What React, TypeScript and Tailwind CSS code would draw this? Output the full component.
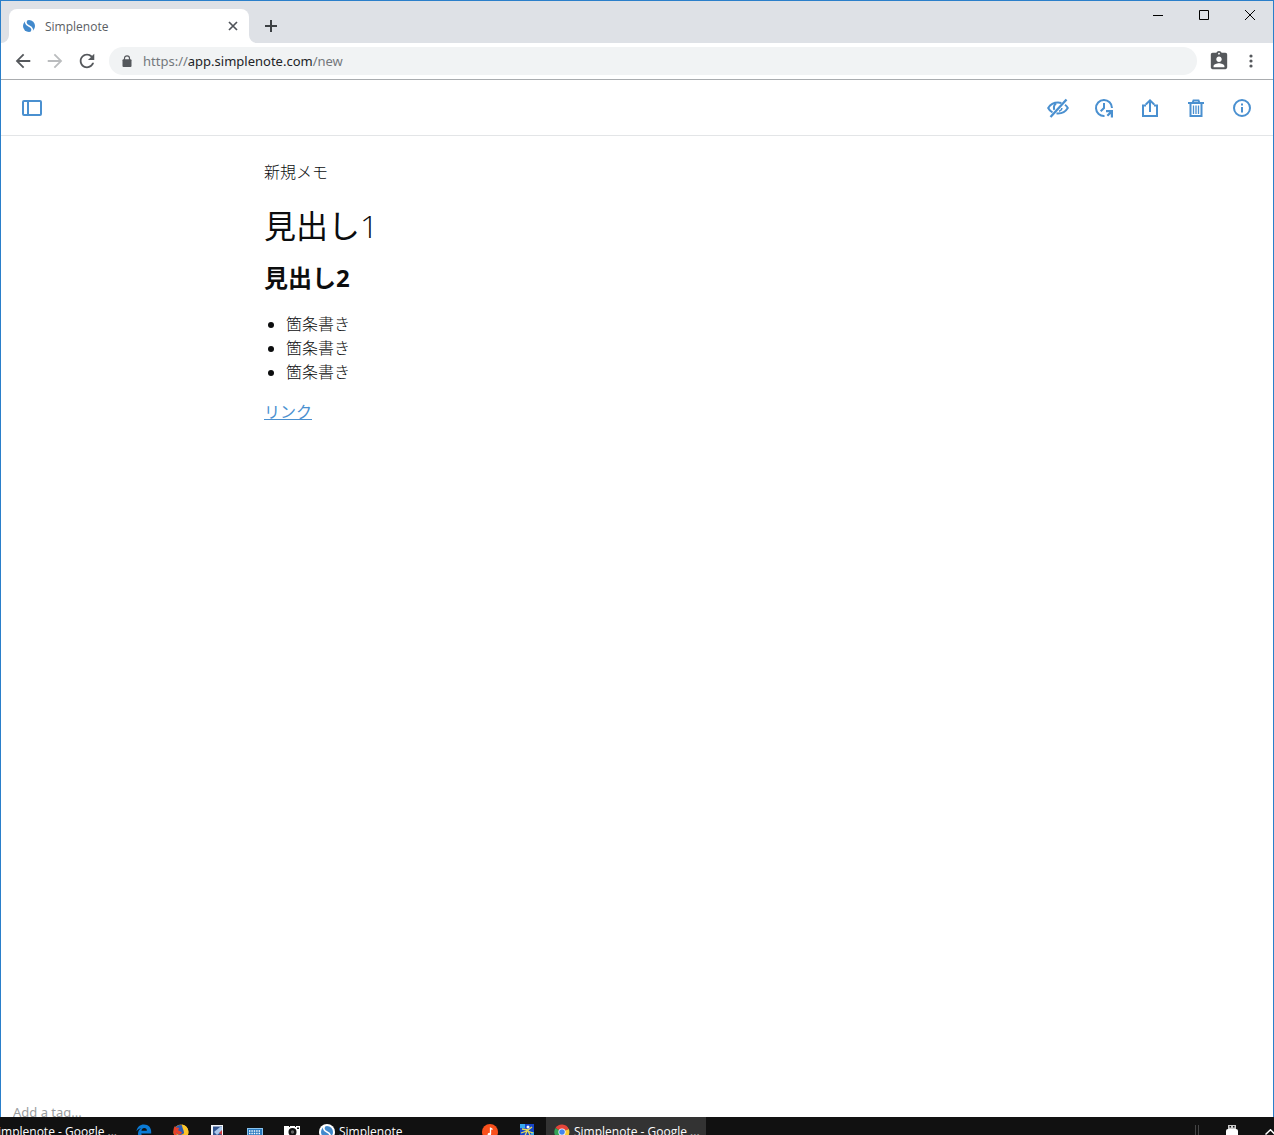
import type { ReactNode } from 'react'

const UI_FONT = 'font-["Open_Sans","Noto_Sans_CJK_JP",sans-serif]'

function SimplenoteLogo ({ className }: Readonly<{ className: string }>) {
  return (
    <svg viewBox="0 0 24 24" className={className} aria-hidden="true">
      <circle cx="12" cy="12" r="12" fill="#4289cc" />
      <path d="M8-2C4 4 5 9.500 12 12s8 8 4 14" fill="none" stroke="#fff" strokeWidth="3.500" />
    </svg>
  )
}

function TitleBar () {
  return (
    <header className="flex h-[42px] items-start justify-between bg-[#dee1e6] pl-2">
      <div className="flex items-center pt-2">
        <div className="relative flex h-[34px] w-60 items-center rounded-t-lg bg-white pr-2 pl-[14px]">
          <svg viewBox="0 0 8 8" className="absolute bottom-0 -left-2 size-2" fill="#fff" aria-hidden="true">
            <path d="M8 0v8H0a8 8 0 0 0 8-8z" />
          </svg>
          <SimplenoteLogo className="size-3" />
          <span className="ml-[10px] flex-1 pt-[2px] text-xs text-[#5a5e63]">Simplenote</span>
          <button type="button" aria-label="Close tab" className="p-[3px]">
            <svg viewBox="0 0 10 10" className="size-[10px]" stroke="#50545a" strokeWidth="1.700" aria-hidden="true">
              <path d="M1 1l8 8M9 1L1 9" />
            </svg>
          </button>
          <svg viewBox="0 0 8 8" className="absolute -right-2 bottom-0 size-2" fill="#fff" aria-hidden="true">
            <path d="M0 0v8h8a8 8 0 0 1-8-8z" />
          </svg>
        </div>
        <button type="button" aria-label="New tab" className="ml-4">
          <svg viewBox="0 0 12 12" className="size-3" stroke="#3c4043" strokeWidth="2" aria-hidden="true">
            <path d="M6 0v12M0 6h12" />
          </svg>
        </button>
      </div>
      <div className="flex">
        <button type="button" aria-label="Minimize" className="flex h-7 w-[46px] items-center justify-center">
          <svg viewBox="0 0 10 10" className="size-[10px]" stroke="#000" aria-hidden="true">
            <path d="M0 5.500h10" />
          </svg>
        </button>
        <button type="button" aria-label="Maximize" className="flex h-7 w-[46px] items-center justify-center">
          <svg viewBox="0 0 10 10" className="size-[10px]" fill="none" stroke="#000" aria-hidden="true">
            <path d="M.5.5h9v9h-9z" />
          </svg>
        </button>
        <button type="button" aria-label="Close" className="flex h-7 w-[46px] items-center justify-center">
          <svg viewBox="0 0 10 10" className="size-[10px]" stroke="#000" aria-hidden="true">
            <path d="M0 0l10 10M10 0L0 10" />
          </svg>
        </button>
      </div>
    </header>
  )
}

function AddressBar () {
  return (
    <nav className="flex h-[37px] items-center border-b border-[#a9acaf] bg-white px-3">
      <div className="flex gap-3">
        <button type="button" aria-label="Back">
          <svg viewBox="1 1 22 22" className="size-5" fill="#55585c" aria-hidden="true">
            <path d="M20 11H7.830l5.590-5.590L12 4l-8 8 8 8 1.410-1.410L7.830 13H20v-2z" />
          </svg>
        </button>
        <button type="button" aria-label="Forward">
          <svg viewBox="1 1 22 22" className="size-5" fill="#babcbe" aria-hidden="true">
            <path d="M12 4l-1.410 1.410L16.170 11H4v2h12.170l-5.580 5.590L12 20l8-8z" />
          </svg>
        </button>
        <button type="button" aria-label="Reload">
          <svg viewBox="1 1 22 22" className="size-5" fill="#55585c" aria-hidden="true">
            <path d="M17.650 6.350C16.200 4.900 14.210 4 12 4c-4.420 0-7.990 3.580-7.990 8s3.570 8 7.990 8c3.730 0 6.840-2.550 7.730-6h-2.080c-.82 2.330-3.040 4-5.650 4-3.310 0-6-2.690-6-6s2.690-6 6-6c1.660 0 3.140.69 4.220 1.780L13 11h7V4l-2.350 2.350z" />
          </svg>
        </button>
      </div>
      <div className="ml-3 flex h-7 flex-1 items-center rounded-full bg-[#f1f3f4] pl-3">
        <svg viewBox="0 0 10 12" className="size-3" aria-hidden="true">
          <path d="M2.500 5V3.300a2.500 2.500 0 0 1 5 0V5" fill="none" stroke="#55585c" strokeWidth="1.200" />
          <rect x="0.500" y="4.300" width="9" height="7.700" rx="1" fill="#55585c" />
        </svg>
        <p className="ml-[10px] pt-[2px] font-['Noto_Sans',sans-serif] text-[13px] text-[#74787c]">
          https://<span className="text-[#222428]">app.simplenote.com</span>/new
        </p>
      </div>
      <button type="button" aria-label="Profile" className="ml-3">
        <svg viewBox="1 0 22 24" className="h-[22px] w-5" fill="#55585c" aria-hidden="true">
          <path d="M19 3h-4.180C14.400 1.840 13.300 1 12 1c-1.300 0-2.400.84-2.820 2H5c-1.100 0-2 .9-2 2v14c0 1.100.9 2 2 2h14c1.100 0 2-.9 2-2V5c0-1.100-.9-2-2-2zm-7 0c.55 0 1 .45 1 1s-.45 1-1 1-1-.45-1-1 .45-1 1-1zm0 4c1.660 0 3 1.340 3 3s-1.340 3-3 3-3-1.340-3-3 1.340-3 3-3zm6 12H6v-1.400c0-2 4-3.100 6-3.100s6 1.100 6 3.100V19z" />
        </svg>
      </button>
      <button type="button" aria-label="Menu" className="ml-3 flex w-5 justify-center">
        <svg viewBox="0 0 4 14" className="h-[14px] w-1" fill="#55585c" aria-hidden="true">
          <circle cx="2" cy="2" r="1.600" />
          <circle cx="2" cy="7" r="1.600" />
          <circle cx="2" cy="12" r="1.600" />
        </svg>
      </button>
    </nav>
  )
}

function ToolbarButton ({ label, children }: Readonly<{ label: string, children: ReactNode }>) {
  return (
    <button type="button" aria-label={label}>
      <svg viewBox="0 0 24 24" className="size-6" fill="none" stroke="#4a90d0" strokeWidth="2" aria-hidden="true">
        {children}
      </svg>
    </button>
  )
}

function NoteToolbar () {
  return (
    <div className="flex h-14 items-center justify-between border-b border-[#e3e5e7] px-[19px]">
      <ToolbarButton label="Toggle sidebar">
        <rect x="3" y="5" width="18" height="14" rx="1" />
        <path d="M8 5v14" />
      </ToolbarButton>
      <div className="flex gap-[22px]">
        <ToolbarButton label="Edit">
          <path d="M6.500 16.300C4.300 15.200 2.900 13.500 2.200 12 4.200 8.700 7.900 6.500 12 6.500c1.200 0 2.300.2 3.400.5M19 8.800c1.200.9 2.200 2 2.800 3.200-2 3.300-5.700 5.500-9.800 5.500-.5 0-1-.1-1.500-.2" />
          <path d="M8.300 13.800C7.500 11.500 8.200 9 10 7.500" />
          <path d="M4.500 21L20.500 3.500" strokeWidth="2.300" />
          <path d="M13 15.300c1.700-.5 2.700-1.600 2.900-3.300" strokeWidth="1.500" />
        </ToolbarButton>
        <ToolbarButton label="History">
          <path d="M12.500 20A8 8 0 1 1 20 12" />
          <path d="M12 7v5l-3.300 3.300" />
          <path d="M14 14h7v7.500h-2.200v-3.600l-2.700 2.700-1.500-1.500 2.700-2.900H14z" fill="#4a90d0" stroke="none" />
        </ToolbarButton>
        <ToolbarButton label="Share">
          <path d="M8 9.500H5V20h14V9.500h-3M12 16V4.800M7.800 8.500L12 4.300l4.200 4.200" />
        </ToolbarButton>
        <ToolbarButton label="Trash">
          <path d="M4 7h16M8.500 7l1-2.500h5l1 2.500M6.500 7v13h11V7" />
          <path d="M9.500 9.500V18M12 9.500V18M14.500 9.500V18" strokeWidth="1.300" />
        </ToolbarButton>
        <ToolbarButton label="Info">
          <circle cx="12" cy="12" r="8" />
          <path d="M12 11v5.500M12 7.500v2" />
        </ToolbarButton>
      </div>
    </div>
  )
}

function Note () {
  return (
    <article className="mx-auto w-full max-w-[746px] flex-1 pt-6 text-base leading-6 font-light text-[#0c0d0e]">
      <p>新規メモ</p>
      <h1 className="mt-4 text-[32px] leading-[52px] font-normal">見出し<span className="font-light">1</span></h1>
      <h2 className="mt-2 text-2xl leading-9 font-bold">見出し2</h2>
      <ul className="mt-4 list-disc pl-[22px]">
        <li>箇条書き</li>
        <li>箇条書き</li>
        <li>箇条書き</li>
      </ul>
      <p className="mt-4">
        <a href="#link" className="font-normal text-[#4a90d0] underline">リンク</a>
      </p>
    </article>
  )
}

function Taskbar () {
  return (
    <footer className="h-[18px] overflow-hidden bg-[#111]">
      <div className="flex h-[30px] items-center text-xs text-white">
        <button type="button" className="flex h-full w-[125px] items-center justify-end overflow-hidden pr-2">
          <span className="whitespace-nowrap">Simplenote - Google ...</span>
        </button>
        <button type="button" aria-label="Edge" className="flex w-[37px] justify-center">
          <svg viewBox="0 0 16 16" className="size-4" fill="#0b7bd6" aria-hidden="true">
            <path d="M.5 7.200C1 3 4 .5 8 .5c4.500 0 7.200 3.200 7.200 7.300v1.700H5.300c.1 2.200 2 3.300 4.500 3.300 1.700 0 3.300-.5 4.500-1.200v3c-1.300.8-3 1.200-5 1.200-4.300 0-7.300-2.400-7.300-6.200 0-2.400 1.400-4.400 3.500-5.500C3.600 4.600 1.800 5.300.5 7.200zM5.400 6.800h5.500C10.900 5 9.900 4 8.300 4 6.700 4 5.600 5.100 5.400 6.800z" />
          </svg>
        </button>
        <button type="button" aria-label="Firefox" className="flex w-[37px] justify-center">
          <svg viewBox="0 0 16 16" className="size-4" aria-hidden="true">
            <circle cx="8" cy="8" r="7.500" fill="#f9b51c" />
            <circle cx="7" cy="6" r="5" fill="#2b5bb3" />
            <path d="M.5 8C.3 5 1 3 2.200 1.800c0 1 .4 1.500 1 2 1.500-.6 2.300-.3 3 .4L5 6.300c1.300.8 3 1 4 2.200C7 12 4 10 3.500 8 3 11 5 14 9 15.400 4 16 .8 12.500.5 8z" fill="#e8402a" />
            <path d="M9 .6c5 1 7 5 6.300 8.700C14.500 13 12 15 9 15.400c2-2 2.400-4.400 2-7C10.500 5 9 4 9 .6z" fill="#fdc62b" />
          </svg>
        </button>
        <button type="button" aria-label="Notepad" className="flex w-[37px] justify-center">
          <svg viewBox="0 0 16 16" className="size-4" aria-hidden="true">
            <path d="M1 1h12v15H1z" fill="#f4f6fa" />
            <path d="M3 2.500h9V12H3z" fill="#33558f" />
            <path d="M4 8l6-5h2v4l-5 4z" fill="#a9c6ea" />
            <path d="M9 9l3-3v5z" fill="#d64043" />
          </svg>
        </button>
        <button type="button" aria-label="Keyboard" className="flex w-[37px] justify-center">
          <svg viewBox="0 0 16 16" className="size-4" aria-hidden="true">
            <rect y="4" width="16" height="10" fill="#8ac4ef" />
            <rect x="1" y="5" width="14" height="8" fill="#287ac0" />
            <path d="M2 7h12M2 9.500h12" stroke="#fff" strokeWidth="1.400" strokeDasharray="1.400 1" />
          </svg>
        </button>
        <button type="button" aria-label="Camera" className="flex w-[37px] justify-center">
          <svg viewBox="0 0 16 16" className="size-4" aria-hidden="true">
            <path d="M0 2h16v14H0z" fill="#fff" />
            <circle cx="8.500" cy="8" r="4" fill="#111" />
            <circle cx="8.500" cy="8" r="1.700" fill="#666" />
            <path d="M13 3.500h2v1.500h-2zM5 2h1v1H5zM11 2h1v1h-1z" fill="#111" />
          </svg>
        </button>
        <button type="button" className="flex w-40 items-center pl-[9px]">
          <span className="flex size-4 items-center justify-center rounded-full bg-white">
            <SimplenoteLogo className="size-3" />
          </span>
          <span className="ml-1">Simplenote</span>
        </button>
        <button type="button" aria-label="Music" className="flex w-[39px] justify-center">
          <svg viewBox="0 0 16 16" className="size-4" aria-hidden="true">
            <circle cx="8" cy="8" r="8" fill="#f9501c" />
            <path d="M8.500 3.500v6.500M8.500 4l2 1.500" stroke="#fff" strokeWidth="1.300" />
            <circle cx="7.300" cy="10.500" r="1.700" fill="#fff" />
          </svg>
        </button>
        <button type="button" aria-label="Launcher" className="flex w-[37px] justify-center">
          <svg viewBox="0 0 16 16" className="size-4" aria-hidden="true">
            <path d="M0 0h14v16H0z" fill="#1746c8" />
            <path d="M0 0h5v4H0zM11 8h3v4h-3z" fill="#36a8ef" />
            <path d="M2 5l6 1 4-3M1 9l6-2 6 2M7 7l-3 7M8 7l3 6" fill="none" stroke="#e6dc5a" strokeWidth="1.300" />
            <circle cx="8" cy="3" r="1.500" fill="#fff" />
          </svg>
        </button>
        <button type="button" className="flex h-full w-40 items-center bg-[#333] pl-2">
          <svg viewBox="0 0 16 16" className="size-4" aria-hidden="true">
            <path d="M8 8L1.500 4A7.500 7.500 0 0 1 14.800 5z" fill="#e5453a" />
            <path d="M8 8l6.800-3A7.500 7.500 0 0 1 8 15.500z" fill="#fbcb34" />
            <path d="M8 8v7.500A7.500 7.500 0 0 1 1.500 4z" fill="#33a457" />
            <circle cx="8" cy="8" r="3.600" fill="#fff" />
            <circle cx="8" cy="8" r="2.800" fill="#4485ee" />
          </svg>
          <span className="ml-1 whitespace-nowrap">Simplenote - Google ...</span>
        </button>
        <div className="ml-auto flex h-full items-center">
          <span className="mt-4 h-full w-1 border-x border-[#444]" />
          <svg viewBox="0 0 12 16" className="ml-[27px] h-4 w-3" aria-hidden="true">
            <path d="M2 1h8v4H2z" fill="#ccc" />
            <path d="M3.500 2h1.500v1.500H3.500zM7 2h1.500v1.500H7z" fill="#111" />
            <path d="M2 5h8a2 2 0 0 1 2 2v9H0V7a2 2 0 0 1 2-2z" fill="#fff" />
          </svg>
          <svg viewBox="0 0 9 6" className="ml-[27px] h-[6px] w-[9px]" fill="none" stroke="#fff" strokeWidth="1.500" aria-hidden="true">
            <path d="M.5 5.500L5.500.8l4.500 4.700" />
          </svg>
        </div>
      </div>
    </footer>
  )
}

export default function App () {
  return (
    <div className={`flex h-screen flex-col overflow-hidden bg-white ${UI_FONT}`}>
      <div className="flex min-h-0 flex-1 flex-col overflow-hidden border-x border-t border-[#2a7fca]">
        <TitleBar />
        <AddressBar />
        <main className="flex min-h-0 flex-1 flex-col">
          <NoteToolbar />
          <Note />
          <div className="h-4 overflow-hidden px-3">
            <input
              type="text"
              aria-label="Add a tag"
              placeholder="Add a tag..."
              className="block h-[22px] w-full font-['Noto_Sans',sans-serif] text-[13px] placeholder:text-[#9a9da0] focus:outline-none"
            />
          </div>
        </main>
      </div>
      <Taskbar />
    </div>
  )
}
